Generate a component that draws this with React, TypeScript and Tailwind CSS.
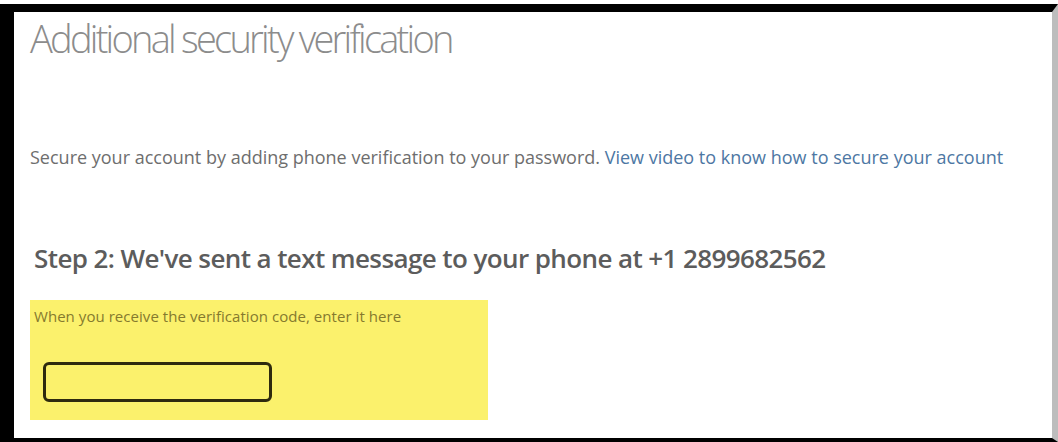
import React, { useState } from "react";

export default function App() {
  const [code, setCode] = useState("");

  return (
    <div className="w-[1058px] h-[442px] bg-white pt-[4px] overflow-hidden">
      {/* dialog frame */}
      <div className="h-full border-t-8 border-l-[14px] border-b-[4px] border-black border-r-[6px] border-r-[#bdbdbd]">
        <div className="h-full flex flex-col pl-[16px] pr-4 font-['Open_Sans',sans-serif]">
          <h1 className="mt-[2px] text-[38px] leading-[48px] font-light text-[#8c8c8c] tracking-[-2.75px]">
            Additional security verification
          </h1>

          <p className="mt-[84px] text-[18px] leading-[22px] text-[#6e6e6e]">
            Secure your account by adding phone verification to your password.{" "}
            <a href="#" className="text-[#4d77a3]">
              View video to know how to secure your account
            </a>
          </p>

          {/* Step 2 */}
          <h2 className="mt-[74px] pl-[4px] text-[26px] leading-[32px] font-semibold text-[#5c5c5c] tracking-[-0.6px]">
            Step 2: We've sent a text message to your phone at +1 2899682562
          </h2>

          <div className="mt-[26px] w-[458px] h-[120px] bg-[#fbf16c] pl-[4px] pt-[6px]">
            <label className="block text-[15px] leading-[20px] text-[#857a2e] tracking-[0.05px]">
              When you receive the verification code, enter it here
            </label>
            <input
              value={code}
              onChange={(e) => setCode(e.target.value)}
              className="mt-[36px] ml-[9px] w-[229px] h-[40px] rounded-[6px] border-[3px] border-[#2e2a0e] bg-transparent outline-none"
            />
          </div>
        </div>
      </div>
    </div>
  );
}
